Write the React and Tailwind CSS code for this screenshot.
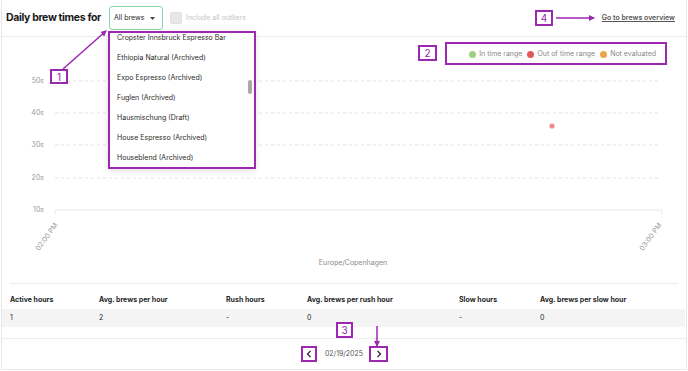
import React from "react";

const P = "#9c27b0";

function Box({ n, className }) {
  return (
    <div
      className={`absolute border-2 border-[#9c27b0] bg-white text-[#9c27b0] text-[10px] leading-none flex items-center justify-center ${className}`}
    >
      {n}
    </div>
  );
}

export default function App() {
  const items = [
    "Cropster Innsbruck Espresso Bar",
    "Ethiopia Natural (Archived)",
    "Expo Espresso (Archived)",
    "Fuglen (Archived)",
    "Hausmischung (Draft)",
    "House Espresso (Archived)",
    "Houseblend (Archived)",
  ];
  const grid = [
    { l: "50s", y: 16 },
    { l: "40s", y: 48 },
    { l: "30s", y: 80 },
    { l: "20s", y: 113 },
  ];
  return (
    <div className="relative w-[688px] h-[371px] bg-white overflow-hidden font-['Inter','Liberation_Sans',sans-serif] text-[#333]">
      <div className="ml-[1px] w-[686px] h-[370px] border-l border-r border-b border-[#e6e6e6] flex flex-col">
        {/* header */}
        <div className="h-[37px] border-b border-[#ececec] flex items-center pl-[4px] pr-[11px] shrink-0">
          <div className="text-[10.5px] font-bold text-[#1a1a1a] tracking-[-0.35px]">Daily brew times for</div>
          <div className="ml-[8px] w-[54px] h-[24px] border-[1.5px] border-[#86d9ad] rounded-[3px] flex items-center pl-[4px] pr-[7px] justify-between">
            <span className="text-[7px] text-[#2a2a2a]">All brews</span>
            <svg width="5" height="3" viewBox="0 0 5 3"><path d="M0 0 L5 0 L2.5 3 Z" fill="#444" /></svg>
          </div>
          <div className="ml-[7px] w-[12px] h-[12px] rounded-[2px] bg-[#e8e8e8] border border-[#e0e0e0]" />
          <span className="ml-[4px] text-[7px] text-[#c4c4c4]">Include all outliers</span>
          <a className="ml-auto text-[7px] font-semibold text-[#555] underline">Go to brews overview</a>
        </div>

        {/* chart */}
        <div className="h-[246px] flex flex-col shrink-0">
          <div className="h-[28px] flex justify-end items-start pr-[19px] pt-[5px]">
            <div className="h-[23px] w-[222px] border-2 border-[#9c27b0] flex items-center justify-end pr-[9px] pt-[1px] gap-[5px] text-[7px] text-[#888]">
              <span className="flex items-center gap-[3px]"><span className="w-[7px] h-[7px] rounded-full bg-[#9ccf7f]" />In time range</span>
              <span className="flex items-center gap-[3px]"><span className="w-[7px] h-[7px] rounded-full bg-[#de5a57]" />Out of time range</span>
              <span className="flex items-center gap-[3px]"><span className="w-[7px] h-[7px] rounded-full bg-[#e8a64c]" />Not evaluated</span>
            </div>
          </div>
          <svg width="684" height="218" className="block">
            {grid.map((g) => (
              <g key={g.l}>
                <text x="42" y={g.y} textAnchor="end" dominantBaseline="middle" fontSize="7" fill="#9a9a9a" fontFamily="Inter, sans-serif">{g.l}</text>
                <line x1="53" x2="658" y1={g.y} y2={g.y} stroke="#e2e2e2" strokeWidth="1" strokeDasharray="3 3" />
              </g>
            ))}
            <text x="42" y="145" textAnchor="end" dominantBaseline="middle" fontSize="7" fill="#9a9a9a" fontFamily="Inter, sans-serif">10s</text>
            <line x1="53" x2="660" y1="145" y2="145" stroke="#e3ebea" strokeWidth="1.2" />
            <line x1="53" x2="53" y1="145" y2="149" stroke="#e3ebea" strokeWidth="1" />
            <line x1="660" x2="660" y1="145" y2="149" stroke="#e3ebea" strokeWidth="1" />
            <circle cx="550" cy="61" r="2.6" fill="#ee8c8c" />
            <text x="56" y="160" textAnchor="end" fontSize="7" fill="#9a9a9a" transform="rotate(-54 56 160)" fontFamily="Inter, sans-serif">02:00 PM</text>
            <text x="660" y="160" textAnchor="end" fontSize="7" fill="#9a9a9a" transform="rotate(-54 660 160)" fontFamily="Inter, sans-serif">03:00 PM</text>
            <text x="351" y="198" textAnchor="middle" dominantBaseline="middle" fontSize="7" fill="#8a8a8a" fontFamily="Inter, sans-serif">Europe/Copenhagen</text>
          </svg>
        </div>

        {/* separator */}
        <div className="mx-[8px] border-t border-[#ececec] shrink-0" />

        {/* table */}
        <div className="mt-[8px] text-[7px]">
          <div className="h-[17px] grid grid-cols-[89px_127px_81px_152px_81px_1fr] items-center pl-[8px] font-bold text-[#1f1f1f]">
            <span>Active hours</span>
            <span>Avg. brews per hour</span>
            <span>Rush hours</span>
            <span>Avg. brews per rush hour</span>
            <span>Slow hours</span>
            <span>Avg. brews per slow hour</span>
          </div>
          <div className="h-[18px] bg-[#f4f4f4] grid grid-cols-[89px_127px_81px_152px_81px_1fr] items-center pl-[8px] text-[#2a2a2a] mr-[1px]">
            <span>1</span>
            <span>2</span>
            <span>-</span>
            <span>0</span>
            <span>-</span>
            <span>0</span>
          </div>
        </div>

        <div className="mt-[11px] border-t border-[#ececec] flex-1 flex items-center justify-center">
          <div className="flex items-center ml-[1px]">
            <button className="w-[16px] h-[16px] border-2 border-[#9c27b0] flex items-center justify-center">
              <svg width="6" height="8" viewBox="0 0 6 8"><path d="M4.5 1 L1.5 4 L4.5 7" fill="none" stroke="#333" strokeWidth="1.4" /></svg>
            </button>
            <span className="ml-[8px] mr-[6px] text-[7px] text-[#555]">02/19/2025</span>
            <button className="w-[19px] h-[16px] border-2 border-[#9c27b0] flex items-center justify-center">
              <svg width="6" height="8" viewBox="0 0 6 8"><path d="M1.5 1 L4.5 4 L1.5 7" fill="none" stroke="#333" strokeWidth="1.4" /></svg>
            </button>
          </div>
        </div>
      </div>

      {/* dropdown */}
      <div className="absolute left-[108px] top-[31px] w-[148px] h-[138px] bg-white border-2 border-[#9c27b0] shadow-[0_2px_6px_rgba(0,0,0,0.12)] overflow-hidden">
        <div className="-mt-[5px] flex flex-col">
          {items.map((t) => (
            <div key={t} className="h-[20px] flex items-center pl-[7px] text-[7px] text-[#2a2a2a] whitespace-nowrap">{t}</div>
          ))}
        </div>
        <div className="absolute left-[138px] top-[47px] w-[4px] h-[14px] rounded-full bg-[#a8a8a8]" />
      </div>

      {/* annotations */}
      <svg className="absolute inset-0 pointer-events-none" width="688" height="371">
        <defs>
          <marker id="ah" markerWidth="6" markerHeight="6" refX="5" refY="3" orient="auto" markerUnits="userSpaceOnUse">
            <path d="M0 0 L6 3 L0 6 Z" fill={P} />
          </marker>
        </defs>
        <line x1="63" y1="69" x2="106" y2="31" stroke={P} strokeWidth="1.5" markerEnd="url(#ah)" />
        <line x1="556" y1="18" x2="594" y2="18" stroke={P} strokeWidth="1.5" markerEnd="url(#ah)" />
        <line x1="377" y1="326" x2="377" y2="346" stroke={P} strokeWidth="1.5" markerEnd="url(#ah)" />
      </svg>
      <Box n="1" className="left-[50px] top-[69px] w-[18px] h-[15px]" />
      <Box n="2" className="left-[418px] top-[45px] w-[19px] h-[16px]" />
      <Box n="3" className="left-[336px] top-[322px] w-[17px] h-[16px]" />
      <Box n="4" className="left-[535px] top-[10px] w-[18px] h-[16px]" />
    </div>
  );
}
